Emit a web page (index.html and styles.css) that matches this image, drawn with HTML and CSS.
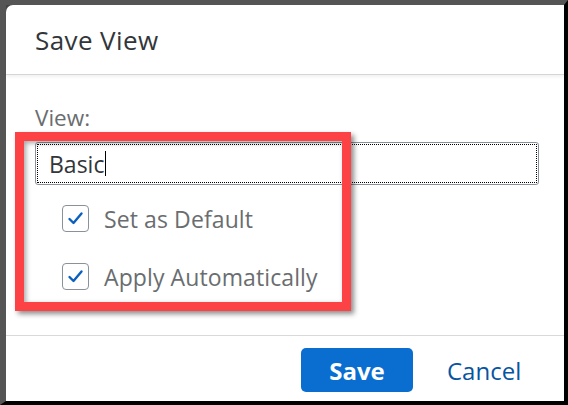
FILE: index.html
```html
<!DOCTYPE html>
<html>
<head>
<meta charset="utf-8">
<link rel="stylesheet" href="styles.css">
</head>
<body>
<div class="frame">
  <div class="dialog">
    <div class="header"><span class="title">Save View</span></div>
    <div class="content">
      <div class="label">View:</div>
      <div class="input"><div class="focus"><span class="value">Basic</span><span class="caret"></span></div></div>
      <div class="checks">
        <div class="check-row">
          <span class="box"><svg width="27" height="27" viewBox="0 0 27 27"><path d="M7.5 14 L11.5 18 L19.5 8.5" fill="none" stroke="#0b5fbf" stroke-width="2.4" stroke-linecap="round" stroke-linejoin="round"/></svg></span>
          <span class="check-label">Set as Default</span>
        </div>
        <div class="check-row">
          <span class="box"><svg width="27" height="27" viewBox="0 0 27 27"><path d="M7.5 14 L11.5 18 L19.5 8.5" fill="none" stroke="#0b5fbf" stroke-width="2.4" stroke-linecap="round" stroke-linejoin="round"/></svg></span>
          <span class="check-label">Apply Automatically</span>
        </div>
      </div>
    </div>
    <div class="footer">
      <button class="btn-save">Save</button>
      <button class="btn-cancel">Cancel</button>
    </div>
  </div>
</div>
<div class="highlight"></div>
</body>
</html>
```

FILE: styles.css
```css
html, body {
  margin: 0;
  padding: 0;
}
body {
  width: 568px;
  height: 405px;
  background: #000;
  font-family: "Open Sans", "Noto Sans", sans-serif;
  position: relative;
  overflow: hidden;
}
.frame {
  box-sizing: border-box;
  width: 568px;
  height: 405px;
  border-top: 5px solid #555;
  border-left: 6px solid #555;
  border-right: 4px solid #000;
  border-bottom: 4px solid #000;
  background: #444;
}
.dialog {
  height: 100%;
  background: #fff;
  border-radius: 7px 0 0 0;
  display: flex;
  flex-direction: column;
}
.header {
  height: 69px;
  flex: none;
  display: flex;
  align-items: center;
  padding-left: 29px;
  border-bottom: 1px solid #d6d6d6;
  box-shadow: 0 2px 3px rgba(0, 0, 0, 0.06);
}
.title {
  font-size: 26px;
  letter-spacing: 0.4px;
  color: #32363a;
  margin-top: 1px;
}
.content {
  flex: 1;
  padding: 0 25px 0 29px;
}
.label {
  margin-top: 29px;
  font-size: 22.5px;
  line-height: 28px;
  color: #6a6d70;
}
.input {
  margin-top: 10px;
  box-sizing: border-box;
  height: 43px;
  border: 1px solid #89919a;
  border-radius: 3px;
  padding: 1px;
}
.focus {
  box-sizing: border-box;
  height: 100%;
  border: 1px dotted #000;
  display: flex;
  align-items: center;
  padding-left: 11px;
}
.value {
  font-size: 23px;
  color: #32363a;
}
.caret {
  width: 1px;
  height: 25px;
  margin-left: 1px;
  background: #000;
}
.checks {
  padding-left: 27px;
  margin-top: 20px;
  display: flex;
  flex-direction: column;
  gap: 31px;
}
.check-row {
  display: flex;
  align-items: center;
  gap: 15px;
  height: 27px;
}
.box {
  box-sizing: border-box;
  width: 27px;
  height: 27px;
  border: 1px solid #89919a;
  border-radius: 4px;
  display: block;
}
.box svg {
  display: block;
  margin: -1px;
}
.check-label {
  font-size: 23px;
  letter-spacing: 0.1px;
  color: #6a6d70;
}
.footer {
  flex: none;
  height: 66px;
  border-top: 1px solid #d9d9d9;
  display: flex;
  align-items: flex-start;
  padding: 12px 0 0 295px;
  box-sizing: border-box;
}
.btn-save {
  width: 112px;
  height: 44px;
  border: none;
  border-radius: 5px;
  background: #0a6ed1;
  color: #fff;
  font-family: inherit;
  font-size: 24px;
  font-weight: bold;
  padding: 0;
}
.btn-cancel {
  margin-left: 34px;
  height: 44px;
  border: none;
  background: none;
  color: #0854a0;
  font-family: inherit;
  font-size: 24px;
  padding: 0;
}
.highlight {
  position: absolute;
  left: 15px;
  top: 132px;
  width: 336px;
  height: 179px;
  box-sizing: border-box;
  border: 9px solid #fd4246;
  box-shadow: 3px 3px 5px rgba(0, 0, 0, 0.45), inset 2px 2px 5px rgba(0, 0, 0, 0.35);
}
```
